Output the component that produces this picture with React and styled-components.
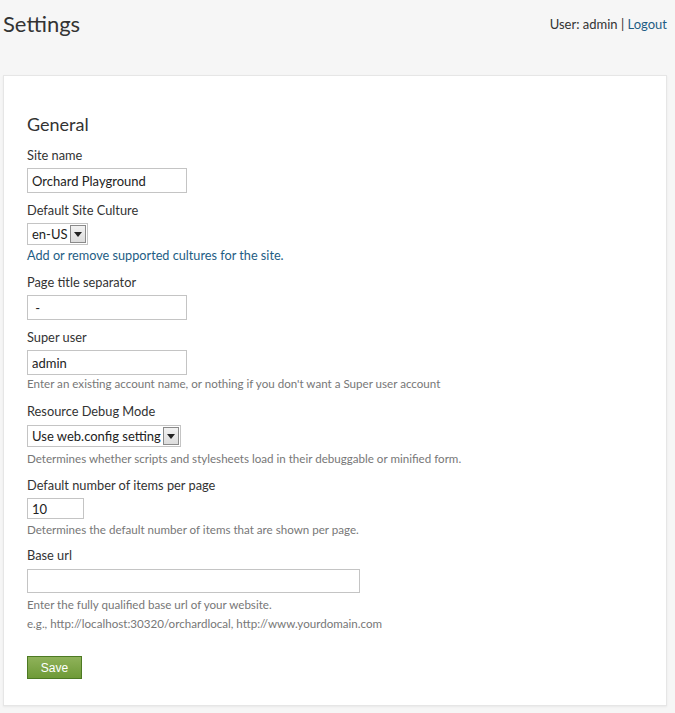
import React from "react";
import styled, { createGlobalStyle } from "styled-components";

const Global = createGlobalStyle`
  html, body { margin: 0; padding: 0; background: #f6f6f6; }
  body { font-family: "Lato", "Open Sans", sans-serif; color: #333; }
  * { box-sizing: border-box; }
`;

const Page = styled.div`
  width: 675px;
  min-height: 713px;
  background: #f6f6f6;
  padding: 0 8px 7px 3px;
`;

const Header = styled.header`
  display: flex;
  justify-content: space-between;
  align-items: flex-start;
  height: 75px;
  padding-top: 9px;
`;

const Title = styled.h1`
  margin: 0;
  font-size: 22px;
  font-weight: 400;
  line-height: 30px;
  color: #333;
`;

const UserBar = styled.div`
  font-size: 13px;
  line-height: 18px;
  margin-top: 6px;
  color: #333;
`;

const Link = styled.a`
  color: #1e5d84;
  text-decoration: none;
`;

const Panel = styled.section`
  background: #fff;
  border: 1px solid #e6e6e6;
  box-shadow: 0 1px 2px rgba(0,0,0,0.06);
  padding: 36px 23px 26px;
  min-height: 631px;
`;

const Heading = styled.h2`
  margin: 0 0 10px;
  font-size: 18px;
  font-weight: 400;
  line-height: 24px;
  color: #333;
`;

const Field = styled.div`
  display: flex;
  flex-direction: column;
  align-items: flex-start;
  margin-top: ${p => p.$top ?? 8}px;
`;

const Label = styled.label`
  font-size: 12.8px;
  line-height: 18px;
  color: #333;
  margin-bottom: ${p => p.$gap ?? 4}px;
`;

const TextInput = styled.input`
  width: ${p => p.$w}px;
  height: ${p => p.$h ?? 25}px;
  border: 1px solid #c4c4c4;
  padding: 0 4px;
  font-family: "Lato", "Open Sans", sans-serif;
  font-size: 13px;
  color: #222;
  background: #fff;
  outline: none;
`;

const SelectBox = styled.div`
  display: inline-flex;
  align-items: center;
  height: 22px;
  border: 1px solid #c4c4c4;
  padding: 0 1px 0 4px;
  font-size: 13px;
  color: #222;
  background: #fff;
  gap: 2px;
`;

const ArrowBtn = styled.span`
  width: 16px;
  height: 18px;
  border: 1px solid #8a8a8a;
  background: linear-gradient(#f2f2f2, #dcdcdc);
  display: flex;
  align-items: center;
  justify-content: center;
`;

const Hint = styled.div`
  font-size: 11.6px;
  line-height: 16px;
  color: #777;
  margin-top: ${p => p.$top ?? 2}px;
`;

const FieldLink = styled(Link)`
  font-size: 12.7px;
  line-height: 18px;
  margin-top: 1px;
`;

const SaveButton = styled.button`
  margin-top: 24px;
  width: 55px;
  height: 23px;
  border: 1px solid #4d7a23;
  background: linear-gradient(#8fb25a, #6e9a37);
  color: #fff;
  font-family: "Liberation Sans", Arial, sans-serif;
  font-size: 12px;
  padding: 0;
  cursor: pointer;
`;

const Select = ({ value }) => (
  <SelectBox>
    <span>{value}</span>
    <ArrowBtn>
      <svg width="8" height="5" viewBox="0 0 8 5">
        <path d="M0 0h8L4 5z" fill="#222" />
      </svg>
    </ArrowBtn>
  </SelectBox>
);

export default function App() {
  return (
    <>
      <Global />
      <Page>
        <Header>
          <Title>Settings</Title>
          <UserBar>
            User: admin | <Link href="#">Logout</Link>
          </UserBar>
        </Header>
        <Panel>
          <Heading>General</Heading>
          <Field $top={0}>
            <Label>Site name</Label>
            <TextInput $w={160} defaultValue="Orchard Playground" />
          </Field>
          <Field>
            <Label>Default Site Culture</Label>
            <Select value="en-US" />
            <FieldLink href="#">Add or remove supported cultures for the site.</FieldLink>
          </Field>
          <Field $top={9}>
            <Label>Page title separator</Label>
            <TextInput $w={160} defaultValue=" -" />
          </Field>
          <Field>
            <Label>Super user</Label>
            <TextInput $w={160} defaultValue="admin" />
            <Hint $top={1}>Enter an existing account name, or nothing if you don't want a Super user account</Hint>
          </Field>
          <Field $top={10}>
            <Label $gap={5}>Resource Debug Mode</Label>
            <Select value="Use web.config setting" />
            <Hint $top={4}>Determines whether scripts and stylesheets load in their debuggable or minified form.</Hint>
          </Field>
          <Field $top={9}>
            <Label>Default number of items per page</Label>
            <TextInput $w={57} $h={21} defaultValue="10" />
            <Hint $top={3}>Determines the default number of items that are shown per page.</Hint>
          </Field>
          <Field>
            <Label $gap={5}>Base url</Label>
            <TextInput $w={333} $h={24} defaultValue="" />
            <Hint $top={4}>Enter the fully qualified base url of your website.</Hint>
            <Hint $top={3}>e.g., http://localhost:30320/orchardlocal, http://www.yourdomain.com</Hint>
          </Field>
          <SaveButton>Save</SaveButton>
        </Panel>
      </Page>
    </>
  );
}
